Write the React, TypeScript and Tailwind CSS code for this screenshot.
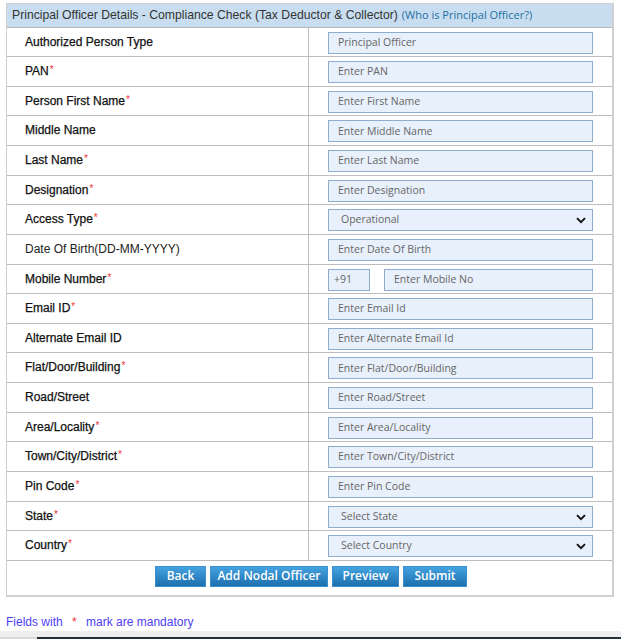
import React from "react";

type Row = {
  label: string;
  req?: boolean;
  kind: "input" | "select" | "mobile";
  ph: string;
  light?: boolean;
  value?: boolean;
};

const rows: Row[] = [
  { label: "Authorized Person Type", kind: "input", ph: "Principal Officer", value: true },
  { label: "PAN", req: true, kind: "input", ph: "Enter PAN" },
  { label: "Person First Name", req: true, kind: "input", ph: "Enter First Name" },
  { label: "Middle Name", kind: "input", ph: "Enter Middle Name" },
  { label: "Last Name", req: true, kind: "input", ph: "Enter Last Name" },
  { label: "Designation", req: true, kind: "input", ph: "Enter Designation" },
  { label: "Access Type", req: true, kind: "select", ph: "Operational" },
  { label: "Date Of Birth(DD-MM-YYYY)", kind: "input", ph: "Enter Date Of Birth", light: true },
  { label: "Mobile Number", req: true, kind: "mobile", ph: "Enter Mobile No" },
  { label: "Email ID", req: true, kind: "input", ph: "Enter Email Id" },
  { label: "Alternate Email ID", kind: "input", ph: "Enter Alternate Email Id" },
  { label: "Flat/Door/Building", req: true, kind: "input", ph: "Enter Flat/Door/Building" },
  { label: "Road/Street", kind: "input", ph: "Enter Road/Street" },
  { label: "Area/Locality", req: true, kind: "input", ph: "Enter Area/Locality" },
  { label: "Town/City/District", req: true, kind: "input", ph: "Enter Town/City/District" },
  { label: "Pin Code", req: true, kind: "input", ph: "Enter Pin Code" },
  { label: "State", req: true, kind: "select", ph: "Select State" },
  { label: "Country", req: true, kind: "select", ph: "Select Country" },
];

const inputCls =
  "h-[22px] border border-[#8eaccc] bg-[#e8f0fb] text-[10.5px] text-[#666] flex items-center [font-family:'Open_Sans',sans-serif]";

function Chevron() {
  return (
    <svg width="10" height="7" viewBox="0 0 10 7" className="absolute right-[6px] top-[7px]">
      <path d="M1 1.2 L5 5.2 L9 1.2" fill="none" stroke="#111" strokeWidth="1.9" />
    </svg>
  );
}

function Btn({ children, w }: { children: React.ReactNode; w: string }) {
  return (
    <button
      className={`${w} h-[21px] border border-[#3a8fd0] bg-gradient-to-b from-[#45a3e0] to-[#1b6fae] text-white text-[12px] font-semibold [font-family:'Open_Sans',sans-serif] flex items-center justify-center`}
    >
      {children}
    </button>
  );
}

export default function App() {
  return (
    <div className="w-[621px] h-[639px] bg-white relative overflow-hidden [font-family:'Liberation_Sans',Arial,sans-serif]">
      <div className="pt-[3px] pl-[6px]">
        <div className="w-[608px] border border-[#cfcfcf] border-r-2 border-b-2 border-t-0">
          <div className="h-[24.5px] bg-[#c8def0] border-t border-[#cfcfcf] border-b border-b-[#b5b5b5] flex items-center pl-[5px]">
            <span className="text-[12.2px] text-[#333]">
              Principal Officer Details - Compliance Check (Tax Deductor &amp; Collector)
            </span>
            <span className="ml-[4px] text-[11px] text-[#1e6fa3] [font-family:'Open_Sans',sans-serif]">
              (Who is Principal Officer?)
            </span>
          </div>
          {rows.map((r, i) => (
            <div key={i} className="h-[29.63px] flex border-b border-[#bdbdbd]">
              <div className="w-[302px] border-r border-[#bdbdbd] pl-[18px] pt-[6px] leading-[14px]">
                <span
                  className={`text-[12px] ${r.light ? "text-[#222]" : "text-[#111] [-webkit-text-stroke:0.25px_#111]"}`}
                >
                  {r.label}
                </span>
                {r.req && (
                  <span className="text-[#e33] text-[10px] relative -top-[2px] ml-[1px]">*</span>
                )}
              </div>
              <div className="flex-1 pl-[19px] pt-[4px]">
                {r.kind === "input" && (
                  <div className={`${inputCls} w-[265px] pl-[9px] ${r.value ? "text-[#555]" : ""}`}>
                    {r.ph}
                  </div>
                )}
                {r.kind === "select" && (
                  <div className={`${inputCls} w-[265px] pl-[12px] relative text-[#444]`}>
                    {r.ph}
                    <Chevron />
                  </div>
                )}
                {r.kind === "mobile" && (
                  <div className="flex">
                    <div className={`${inputCls} w-[42px] pl-[5px]`}>+91</div>
                    <div className={`${inputCls} w-[209px] ml-[14px] pl-[9px]`}>{r.ph}</div>
                  </div>
                )}
              </div>
            </div>
          ))}
          <div className="h-[34px] flex items-start pt-[5px] pl-[148px] gap-[4px]">
            <Btn w="w-[51px]">Back</Btn>
            <Btn w="w-[118px]">Add Nodal Officer</Btn>
            <Btn w="w-[67px]">Preview</Btn>
            <Btn w="w-[64px]">Submit</Btn>
          </div>
        </div>
        <div className="mt-[16px] text-[12px] text-[#5040f5]">
          Fields with <span className="text-[#e33] mx-[6px]">*</span> mark are mandatory
        </div>
      </div>
      <div className="absolute left-0 right-0 top-[631px] h-[6px] bg-[#eeeeee]" />
      <div className="absolute left-[37px] right-0 top-[637px] h-[2px] bg-[#243038]" />
      <div className="absolute left-0 w-[37px] top-[637px] h-[2px] bg-[#d9d9d9]" />
    </div>
  );
}
